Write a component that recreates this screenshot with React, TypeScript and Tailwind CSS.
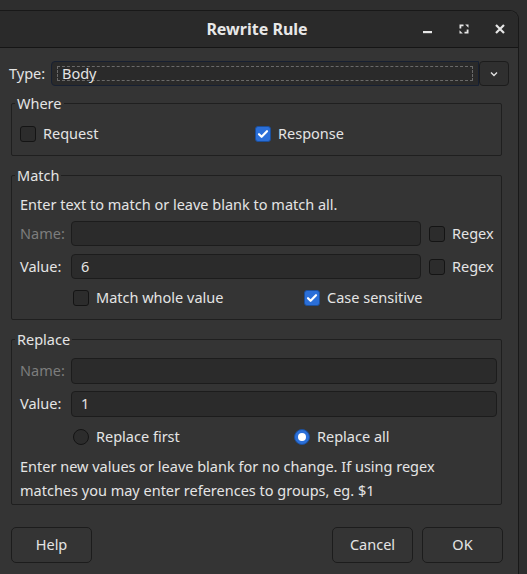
import React from "react";

function CheckBox({ checked = false }: { checked?: boolean }) {
    if (checked) {
        return (
            <span className="flex h-[16px] w-[16px] shrink-0 items-center justify-center rounded-[3px] border border-[#1b4f9c] bg-[#2b6fd8]">
                <svg width="12" height="12" viewBox="0 0 12 12" fill="none">
                    <path d="M2 6.2l2.6 2.6L10 3.2" stroke="#ffffff" strokeWidth={2.2} strokeLinecap="round" strokeLinejoin="round" />
                </svg>
            </span>
        );
    }
    return <span className="h-[16px] w-[16px] shrink-0 rounded-[3px] border border-[#141414] bg-[#2c2c2c]" />;
}

function Radio({ checked = false }: { checked?: boolean }) {
    if (checked) {
        return (
            <span className="flex h-[16px] w-[16px] shrink-0 items-center justify-center rounded-full border border-[#1b4f9c] bg-[#2b6fd8]">
                <span className="h-[8px] w-[8px] rounded-full bg-white" />
            </span>
        );
    }
    return <span className="h-[16px] w-[16px] shrink-0 rounded-full border border-[#141414] bg-[#2c2c2c]" />;
}

function Field({ value = "", h = "h-[25px]" }: { value?: string; h?: string }) {
    return (
        <div className={`flex flex-1 items-center rounded-[4px] border border-[#1c1c1c] bg-[#2b2b2b] pl-[9px] ${h}`}>
            {value}
        </div>
    );
}

function Group({ title, children, className = "" }: { title: string; children: React.ReactNode; className?: string }) {
    return (
        <fieldset className={`ml-[2px] mr-[7px] rounded-[2px] border border-[#1f1f1f] pl-[8px] pr-[4px] ${className}`}>
            <legend className="ml-[-5px] px-[2px] leading-[20px]">{title}</legend>
            {children}
        </fieldset>
    );
}

function Regex() {
    return (
        <div className="ml-[8px] flex w-[68px] items-center gap-[7px]">
            <CheckBox />
            <span>Regex</span>
        </div>
    );
}

export default function App() {
    return (
        <div
            className="h-[574px] w-[527px] overflow-hidden bg-[#2e2e2e] pt-[10px] text-[14.5px] text-[#e4e4e4]"
            style={{ fontFamily: '"Noto Sans", "Open Sans", sans-serif' }}
        >
            <div className="flex h-[570px] w-[519px] flex-col rounded-tr-[9px] border-t border-r border-[#181818] bg-[#343434]">
                {/* title bar */}
                <div className="relative flex h-[37px] items-center justify-center rounded-tr-[9px] border-b border-[#151515] bg-[#2a2a2a]">
                    <span className="ml-[-4px] text-[16px] font-bold text-[#e8e8e8]">Rewrite Rule</span>
                    <div className="absolute right-[10px] top-0 flex h-full items-center gap-[20px]">
                        <svg width="16" height="16" viewBox="0 0 16 16">
                            <rect x="3" y="10" width="9" height="2.2" fill="#e6e6e6" />
                        </svg>
                        <svg width="16" height="16" viewBox="0 0 16 16" fill="#e6e6e6">
                            <path d="M3.5 3.5h4v1.8H5.3v2.2H3.5z" />
                            <path d="M12.5 12.5h-4v-1.8h2.2V8.5h1.8z" />
                            <path d="M9.2 3.5h3.3v3.3z" />
                            <path d="M6.8 12.5H3.5V9.2z" />
                        </svg>
                        <svg width="16" height="16" viewBox="0 0 16 16" stroke="#e6e6e6" strokeWidth={2.2}>
                            <path d="M4 4l8 8M12 4l-8 8" />
                        </svg>
                    </div>
                </div>

                <div className="flex flex-1 flex-col px-[9px]">
                    {/* type */}
                    <div className="mt-[13px] flex h-[25px] items-center">
                        <span className="w-[42px]">Type:</span>
                        <div className="flex h-[25px] w-[428px] items-center rounded-l-[4px] border border-[#172032] bg-[#2a2a2a] px-[5px]">
                            <div className="flex h-[15px] flex-1 items-center border border-dashed border-[#6a6a6a] pl-[4px]">Body</div>
                        </div>
                        <div className="flex h-[25px] w-[30px] items-center justify-center rounded-[4px] border border-[#1c1c1c] bg-[#2f2f2f]">
                            <svg width="10" height="10" viewBox="0 0 10 10" fill="none" stroke="#e0e0e0" strokeWidth={1.4}>
                                <path d="M2 3.5l3 3 3-3" />
                            </svg>
                        </div>
                    </div>

                    <Group title="Where" className="mt-[7px] pb-[11px]">
                        <div className="mt-[11px] flex h-[20px] items-center">
                            <div className="flex w-[235px] items-center gap-[7px]">
                                <CheckBox />
                                <span>Request</span>
                            </div>
                            <div className="flex items-center gap-[7px]">
                                <CheckBox checked />
                                <span>Response</span>
                            </div>
                        </div>
                    </Group>

                    <Group title="Match" className="mt-[9px] pb-[11px]">
                        <div className="mt-[9px] leading-[20px]">Enter text to match or leave blank to match all.</div>
                        <div className="mt-[7px] flex items-center">
                            <span className="w-[51px] text-[#7d7d7d]">Name:</span>
                            <Field />
                            <Regex />
                        </div>
                        <div className="mt-[8px] flex items-center">
                            <span className="w-[51px]">Value:</span>
                            <Field value="6" />
                            <Regex />
                        </div>
                        <div className="mt-[9px] flex h-[20px] items-center pl-[53px]">
                            <div className="flex w-[231px] items-center gap-[7px]">
                                <CheckBox />
                                <span>Match whole value</span>
                            </div>
                            <div className="flex items-center gap-[7px]">
                                <CheckBox checked />
                                <span>Case sensitive</span>
                            </div>
                        </div>
                    </Group>

                    <Group title="Replace" className="mt-[9px] pb-[2px]">
                        <div className="mt-[9px] flex items-center">
                            <span className="w-[51px] text-[#7d7d7d]">Name:</span>
                            <Field h="h-[26px]" />
                        </div>
                        <div className="mt-[7px] flex items-center">
                            <span className="w-[51px]">Value:</span>
                            <Field value="1" h="h-[26px]" />
                        </div>
                        <div className="mt-[10px] flex h-[20px] items-center pl-[53px]">
                            <div className="flex w-[221px] items-center gap-[7px]">
                                <Radio />
                                <span>Replace first</span>
                            </div>
                            <div className="flex items-center gap-[7px]">
                                <Radio checked />
                                <span>Replace all</span>
                            </div>
                        </div>
                        <div className="mt-[7px] leading-[24px]">
                            Enter new values or leave blank for no change. If using regex
                            <br />
                            matches you may enter references to groups, eg. $1
                        </div>
                    </Group>

                    <div className="mt-[22px] flex items-center pl-[2px] pr-[6px]">
                        <button className="h-[36px] w-[81px] rounded-[5px] border border-[#1c1c1c] bg-[#343434]">Help</button>
                        <div className="flex-1" />
                        <button className="h-[36px] w-[81px] rounded-[5px] border border-[#1c1c1c] bg-[#343434]">Cancel</button>
                        <button className="ml-[9px] h-[36px] w-[81px] rounded-[5px] border border-[#1c1c1c] bg-[#343434]">OK</button>
                    </div>
                </div>
            </div>
        </div>
    );
}
